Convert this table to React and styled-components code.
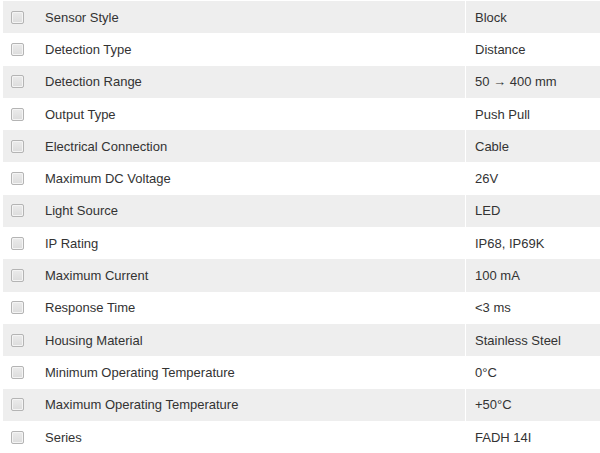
import styled, { createGlobalStyle } from "styled-components";

const GlobalStyle = createGlobalStyle`
  body {
    margin: 0;
    background: #ffffff;
    font-family: "Liberation Sans", Arial, sans-serif;
  }
`;

const Table = styled.div`
  padding: 1px 0 0 3px;
  display: flex;
  flex-direction: column;
`;

const Row = styled.div`
  display: flex;
  align-items: center;
  height: 32.3px;
  background: ${(p) => (p.$shaded ? "#eeeeee" : "#ffffff")};
  font-size: 13px;
  color: #333333;
`;

const CheckCell = styled.div`
  width: 42px;
  height: 100%;
  display: flex;
  align-items: center;
  padding-left: 8px;
  box-sizing: border-box;
`;

const Box = styled.span`
  width: 11px;
  height: 11px;
  border: 1px solid #b4b4b4;
  border-radius: 2px;
  background: linear-gradient(#ebebeb, #dcdcdc);
  box-shadow: inset 0 0 0 1px #f4f4f4;
`;

const Label = styled.div`
  width: 420px;
  height: 100%;
  display: flex;
  align-items: center;
`;

const Value = styled.div`
  flex: 1;
  height: 100%;
  display: flex;
  align-items: center;
  padding-left: 9px;
  border-left: 1px solid #ffffff;
`;

const specs = [
  ["Sensor Style", "Block"],
  ["Detection Type", "Distance"],
  ["Detection Range", "50 \u2192 400 mm"],
  ["Output Type", "Push Pull"],
  ["Electrical Connection", "Cable"],
  ["Maximum DC Voltage", "26V"],
  ["Light Source", "LED"],
  ["IP Rating", "IP68, IP69K"],
  ["Maximum Current", "100 mA"],
  ["Response Time", "<3 ms"],
  ["Housing Material", "Stainless Steel"],
  ["Minimum Operating Temperature", "0\u00b0C"],
  ["Maximum Operating Temperature", "+50\u00b0C"],
  ["Series", "FADH 14I"],
];

const App = () => {
  return (
    <>
      <GlobalStyle />
      <Table>
        {specs.map(([name, value], i) => (
          <Row key={name} $shaded={i % 2 === 0}>
            <CheckCell>
              <Box />
            </CheckCell>
            <Label>{name}</Label>
            <Value>{value}</Value>
          </Row>
        ))}
      </Table>
    </>
  );
};

export default App;
